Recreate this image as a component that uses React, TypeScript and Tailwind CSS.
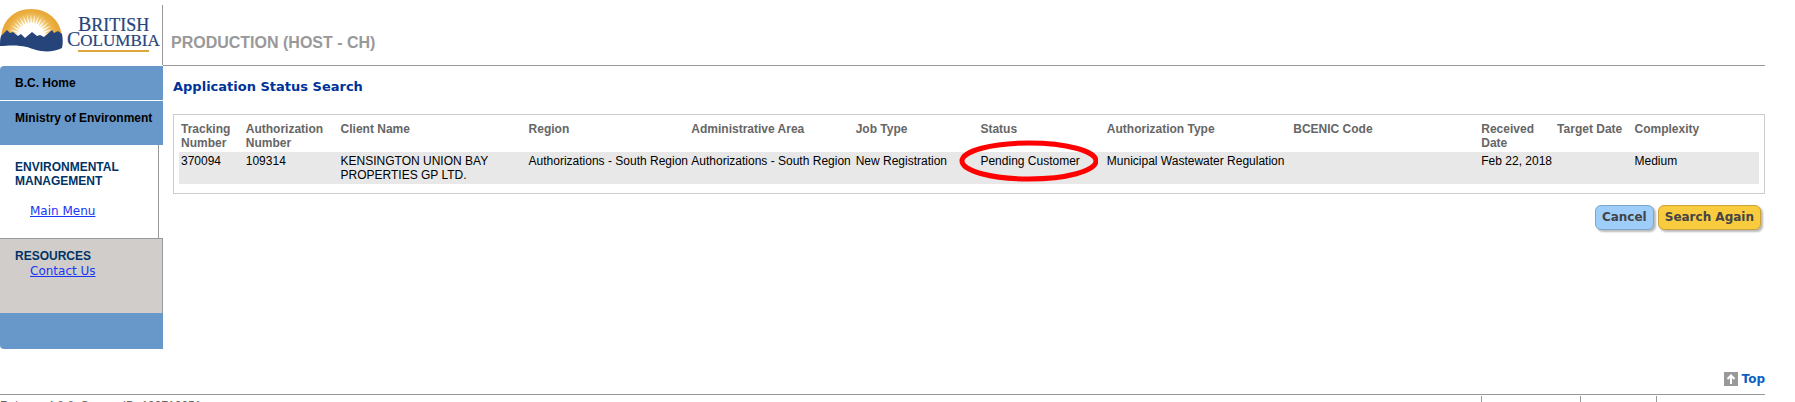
import type { FC, ReactNode } from "react";

const columns = [
	{ title: "Tracking Number", value: "370094", width: "w-[4.1%]" },
	{ title: "Authorization Number", value: "109314", width: "w-[6%]" },
	{
		title: "Client Name",
		value: "KENSINGTON UNION BAY PROPERTIES GP LTD.",
		width: "w-[11.9%]",
	},
	{ title: "Region", value: "Authorizations - South Region", width: "w-[10.3%]" },
	{
		title: "Administrative Area",
		value: "Authorizations - South Region",
		width: "w-[10.4%]",
	},
	{ title: "Job Type", value: "New Registration", width: "w-[7.9%]" },
	{ title: "Status", value: "Pending Customer", width: "w-[8%]", circled: true },
	{
		title: "Authorization Type",
		value: "Municipal Wastewater Regulation",
		width: "w-[11.8%]",
	},
	{ title: "BCENIC Code", value: "", width: "w-[11.9%]" },
	{ title: "Received Date", value: "Feb 22, 2018", width: "w-[4.8%]" },
	{ title: "Target Date", value: "", width: "w-[4.9%]" },
	{ title: "Complexity", value: "Medium", width: "w-[8%]" },
];

const rays = [-80, -70, -60, -50, -40, -30, -20, -10, 0, 10, 20, 30, 40, 50, 60, 70, 80];

const Logo: FC = () => (
	<svg width="162" height="53" viewBox="0 0 162 53" role="img" aria-label="British Columbia">
		<defs>
			<radialGradient id="sun" cx="31" cy="32" r="31" gradientUnits="userSpaceOnUse">
				<stop offset="0.3" stopColor="#fff" />
				<stop offset="0.5" stopColor="#f6d58c" />
				<stop offset="0.8" stopColor="#eaae3f" />
				<stop offset="1" stopColor="#e6a233" />
			</radialGradient>
		</defs>
		<path d="M1 34C1 17 13 4 31 4S62 17 62 34Z" fill="url(#sun)" />
		<g fill="#fff">
			{rays.map((angle) => (
				<path
					key={angle}
					d="M29.8 22L31 9L32.2 22Z"
					transform={`rotate(${angle} 31 32)`}
				/>
			))}
			<circle cx="31" cy="31" r="13" />
		</g>
		{/* mountains, with the river bank sweeping down to the right */}
		<path
			d="M1 31L3 29L7 25L10 28L13 27L18 31L21 29L25 33L32 27L37 31L40 30L44 32L52 25L54 28L58 26L62 29C63 34 63 39 62 43C56 46 49 47 41 46C33 45 28 41 20 41C13 40 6 41 0 41C0 37 0 34 1 31Z"
			fill="#27447a"
		/>
		<g fill="#27447a" stroke="#27447a" strokeWidth="0.2" fontFamily="Liberation Serif, serif">
			<text x="78" y="26" fontSize="20">
				B<tspan fontSize="18">RITISH</tspan>
			</text>
			<text x="67" y="41" fontSize="20">
				C<tspan fontSize="17">OLUMBIA</tspan>
			</text>
		</g>
		<path d="M78 46H149" stroke="#dfa63c" strokeWidth="2" />
	</svg>
);

const SideLink: FC<{ children: ReactNode }> = ({ children }) => (
	<a
		href="#"
		className="ml-[15px] block w-fit font-['DejaVu_Sans',sans-serif] text-xs leading-[14px] text-[#1a35f5] underline"
	>
		{children}
	</a>
);

const Sidebar: FC = () => (
	<nav className="w-[163px] shrink-0 overflow-hidden rounded-l-[4px] text-xs leading-[14px] font-bold">
		<a href="#" className="block h-[35px] border-b border-white bg-[#6898ca] px-[15px] pt-[10px]">
			B.C. Home
		</a>
		<a href="#" className="block h-[44px] bg-[#6898ca] pt-[10px] pl-[15px] whitespace-nowrap">
			Ministry of Environment
		</a>
		<div className="mr-1 h-[93px] border-r border-[#999] px-[15px] pt-[15px] font-normal">
			<h2 className="mb-4 font-bold text-[#036]">ENVIRONMENTAL MANAGEMENT</h2>
			<SideLink>Main Menu</SideLink>
		</div>
		<div className="h-[75px] border-t border-r border-[#999] bg-[#d1cdca] px-[15px] pt-[10px] font-normal">
			<h2 className="mb-px font-bold text-[#036]">RESOURCES</h2>
			<SideLink>Contact Us</SideLink>
		</div>
		<div className="h-9 bg-[#6898ca]" />
	</nav>
);

const ResultsTable: FC = () => (
	<div className="border border-[#ccc] px-[5px] pt-[5px] pb-[9px]">
		<table className="w-full table-fixed text-left text-xs leading-[14px]">
			<thead>
				<tr className="align-top text-[#666]">
					{columns.map((col) => (
						<th key={col.title} className={`${col.width} p-[2px] font-bold`}>
							{col.title}
						</th>
					))}
				</tr>
			</thead>
			<tbody>
				<tr className="bg-[#e8e8e8] align-top">
					{columns.map((col) => (
						<td key={col.title} className="p-[2px]">
							{col.circled ? (
								<span className="relative inline-block whitespace-nowrap">
									{col.value}
									<svg
										width="140"
										height="42"
										viewBox="0 0 140 42"
										className="absolute -top-[14px] -left-[22px] max-w-none"
										aria-hidden="true"
									>
										<ellipse cx="71" cy="21" rx="67" ry="18" fill="none" stroke="#f00" strokeWidth="5" />
									</svg>
								</span>
							) : (
								<span className={col.title === "Client Name" ? "" : "whitespace-nowrap"}>
									{col.value}
								</span>
							)}
						</td>
					))}
				</tr>
			</tbody>
		</table>
	</div>
);

const buttonBase =
	"h-[25px] rounded-[6px] border px-[6px] pb-[2px] font-['DejaVu_Sans',sans-serif] text-xs leading-[20px] font-bold text-[#444] shadow-[2px_2px_2px_#bbb]";

export default function App() {
	return (
		<div className="bg-white pt-[5px] font-['Liberation_Sans',Arial,sans-serif] text-black">
			<header className="mr-[30px] flex h-[60px]">
				<div className="w-[163px] shrink-0 border-r border-[#999]">
					<Logo />
				</div>
				<div className="flex-1 pt-7 pl-2 text-base leading-[20px] font-bold text-[#999]">
					PRODUCTION (HOST - CH)
				</div>
			</header>

			<div className="mr-[30px] flex">
				<div className="pt-px">
					<Sidebar />
				</div>
				<main className="flex min-w-0 flex-1 flex-col border-t border-[#999]">
					<div className="pl-[10px]">
						<h1 className="mt-[13px] mb-[19px] font-['DejaVu_Sans',sans-serif] text-[13px] leading-[16px] font-bold text-[#039]">
							Application Status Search
						</h1>
						<ResultsTable />
						<div className="mt-[11px] mr-1 flex justify-end gap-1">
							<button type="button" className={`${buttonBase} border-[#7ba7cd] bg-[#9fcdf9]`}>
								Cancel
							</button>
							<button type="button" className={`${buttonBase} border-[#c9a23a] bg-[#f9cc40]`}>
								Search Again
							</button>
						</div>
					</div>
				</main>
			</div>

			<div className="mt-[23px] mr-[30px] flex justify-end">
				<a
					href="#"
					className="flex items-center gap-1 font-['DejaVu_Sans',sans-serif] text-xs leading-[14px] font-bold text-[#0b61c4]"
				>
					<svg width="14" height="14" viewBox="0 0 14 14" aria-hidden="true">
						<path d="M0 0H14V14H0Z" fill="#999" />
						<path d="M7 3V12M3.5 7L7 3.5L10.5 7" fill="none" stroke="#fff" strokeWidth="2" />
					</svg>
					Top
				</a>
			</div>

			<footer className="mt-2 mr-[30px] flex h-2 justify-between overflow-hidden border-t border-[#999] pt-px">
				<div className="pt-[3px] text-xs leading-[14px] whitespace-pre text-[#666]">
					{"Release 4.8.8  Server: ID: 139710051"}
				</div>
				<div className="flex">
					<div className="w-[99px] border-l border-[#999]" />
					<div className="w-[76px] border-l border-[#999]" />
					<div className="w-[109px] border-l border-[#999]" />
				</div>
			</footer>
		</div>
	);
}
